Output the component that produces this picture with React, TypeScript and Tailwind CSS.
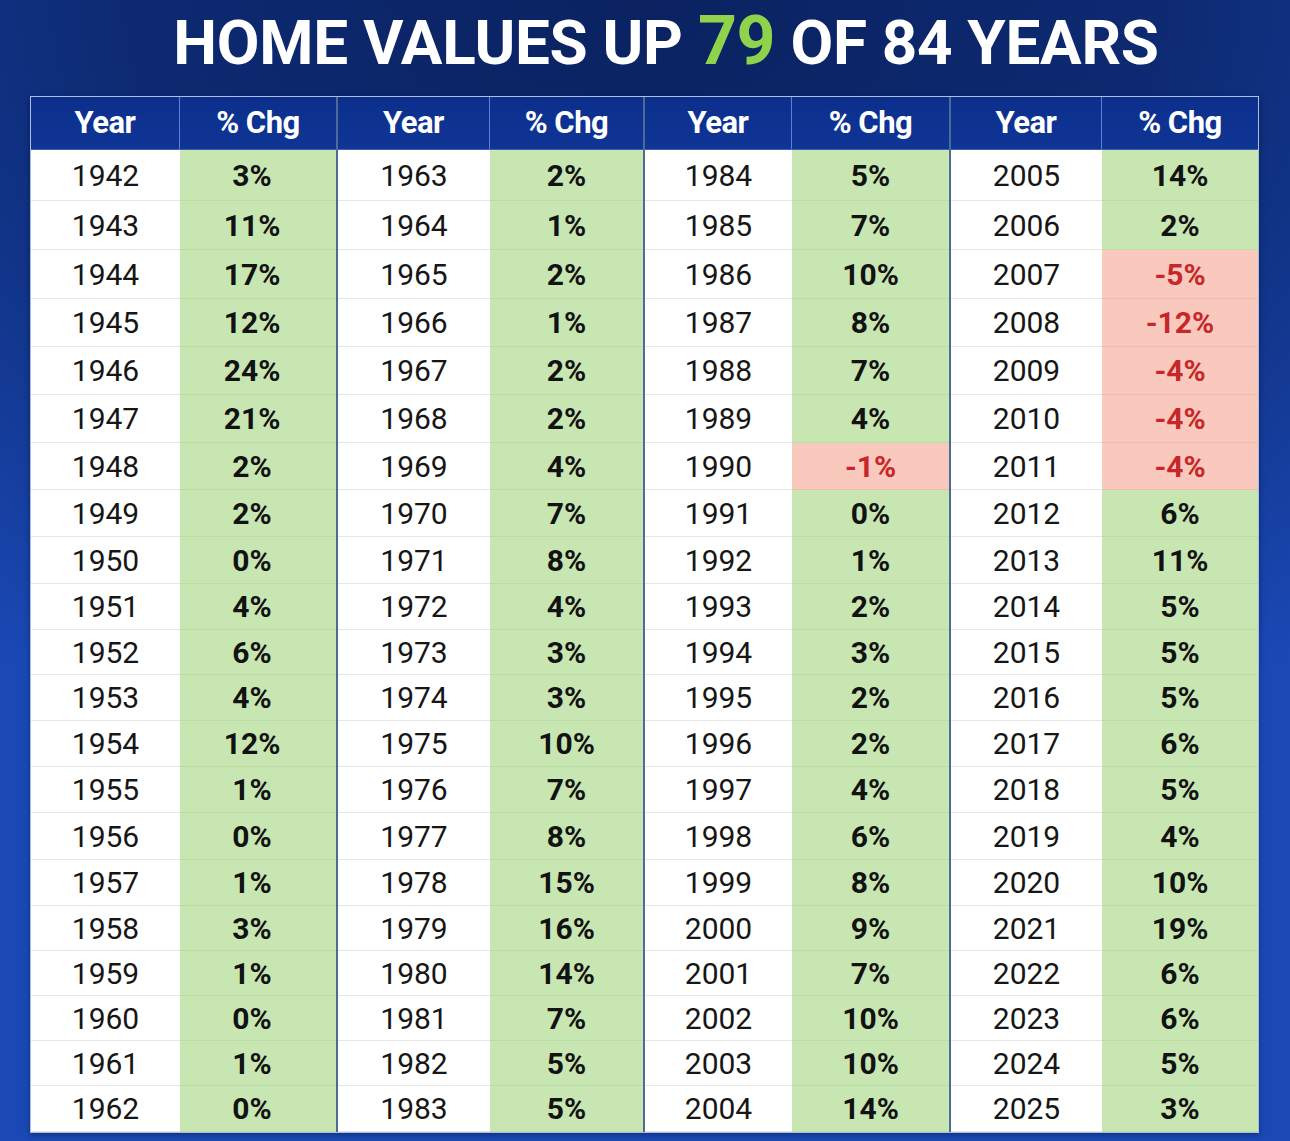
import React from "react";

const H = [
  "h-[51px]", "h-[49px]", "h-[49px]", "h-[48px]", "h-[48px]", "h-[48px]", "h-[47px]",
  "h-[47px]", "h-[47px]", "h-[46px]", "h-[45px]", "h-[46px]", "h-[46px]", "h-[46px]",
  "h-[47px]", "h-[46px]", "h-[45px]", "h-[45px]", "h-[45px]", "h-[45px]", "h-[46px]",
];

const groups: { start: number; vals: number[]; gw: string; yw: string; pp: string }[] = [
  { start: 1942, gw: "w-[305px]", yw: "w-[149px]", pp: "pr-[12px]", vals: [3, 11, 17, 12, 24, 21, 2, 2, 0, 4, 6, 4, 12, 1, 0, 1, 3, 1, 0, 1, 0] },
  { start: 1963, gw: "w-[305px]", yw: "w-[152px]", pp: "pr-[0px]", vals: [2, 1, 2, 1, 2, 2, 4, 7, 8, 4, 3, 3, 10, 7, 8, 15, 16, 14, 7, 5, 5] },
  { start: 1984, gw: "w-[304px]", yw: "w-[147px]", pp: "pr-[0px]", vals: [5, 7, 10, 8, 7, 4, -1, 0, 1, 2, 3, 2, 2, 4, 6, 8, 9, 7, 10, 10, 14] },
  { start: 2005, gw: "flex-1", yw: "w-[151px]", pp: "pr-[0px]", vals: [14, 2, -5, -12, -4, -4, -4, 6, 11, 5, 5, 5, 6, 5, 4, 10, 19, 6, 6, 5, 3] },
];

function Group({ start, vals, gw, yw, pp }: { start: number; vals: number[]; gw: string; yw: string; pp: string }) {
  return (
    <div className={"flex flex-col " + gw}>
      <div className="flex h-[53px] bg-gradient-to-b from-[#0c2f8c] to-[#0f3595] border-b border-[#3d5fae]">
        <div className={yw + " flex items-center justify-center text-white font-bold text-[31px] tracking-[-0.5px] border-r border-[#5b80d4]"}>
          Year
        </div>
        <div className="flex-1 flex items-center justify-center text-white font-bold text-[31px] tracking-[-0.5px]">
          % Chg
        </div>
      </div>
      {vals.map((v, i) => {
        const neg = v < 0;
        return (
          <div key={i} className={"flex " + H[i]}>
            <div className={yw + " flex items-center justify-center bg-white text-[#161616] text-[30px] border-b border-[#e4e6e8]"}>
              {start + i}
            </div>
            <div
              className={
                "flex-1 flex items-center justify-center font-bold text-[30px] border-b " +
                pp +
                " " +
                (neg
                  ? "bg-[#f8c9bc] text-[#c7262b] border-[#efbcae]"
                  : "bg-[#c8e6b2] text-[#121212] border-[#bcdca5]")
              }
            >
              {v}%
            </div>
          </div>
        );
      })}
    </div>
  );
}

export default function App() {
  return (
    <div
      className="w-[1290px] h-[1141px] overflow-hidden bg-[radial-gradient(ellipse_90%_70%_at_50%_0%,#0a2260_0%,#0d2a72_45%,#1a49b6_100%)]"
      style={{ fontFamily: "Roboto, 'Liberation Sans', sans-serif" }}
    >
      <div className="h-[96px] flex items-center justify-center pl-[42px] pb-[14px]">
        <h1 className="text-white font-bold text-[62px] leading-none tracking-[-0.3px]">
          HOME VALUES UP <span className="text-[#8fd34c] text-[68px]">79</span> OF 84 YEARS
        </h1>
      </div>
      <div className="ml-[30px] w-[1229px] border border-[#a9bfea] flex bg-[#c8e6b2] shadow-[0_2px_6px_rgba(0,0,0,0.35)]">
        {groups.map((g, gi) => (
          <React.Fragment key={gi}>
            {gi > 0 && <div className="w-[2px] bg-[#4d6b94]" />}
            <Group start={g.start} vals={g.vals} gw={g.gw} yw={g.yw} pp={g.pp} />
          </React.Fragment>
        ))}
      </div>
    </div>
  );
}
